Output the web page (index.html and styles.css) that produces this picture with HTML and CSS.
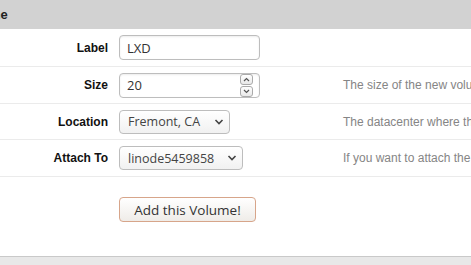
FILE: index.html
```html
<!DOCTYPE html>
<html lang="en">
<head>
    <meta charset="UTF-8">
    <title>Add a Volume</title>
    <link rel="stylesheet" href="styles.css">
</head>
<body>
    <div class="panel">
        <div class="panel-head">Add a Volume</div>

        <div class="row r-label">
            <div class="label">Label</div>
            <div class="field"><input class="text-input" type="text" value="LXD"></div>
            <div class="help"></div>
        </div>

        <div class="row r-size">
            <div class="label">Size</div>
            <div class="field">
                <div class="number-input">
                    <input type="text" value="20">
                    <span class="spin">
                        <span class="spin-btn"><svg width="7" height="5" viewBox="0 0 7 5"><path d="M1 4 L3.5 1.5 L6 4" fill="none" stroke="#555" stroke-width="1.2"/></svg></span>
                        <span class="spin-btn"><svg width="7" height="5" viewBox="0 0 7 5"><path d="M1 1 L3.5 3.5 L6 1" fill="none" stroke="#555" stroke-width="1.2"/></svg></span>
                    </span>
                </div>
            </div>
            <div class="help">The size of the new volume in GiB.</div>
        </div>

        <div class="row r-loc">
            <div class="label">Location</div>
            <div class="field">
                <div class="select loc">
                    <span>Fremont, CA</span>
                    <svg width="10" height="6" viewBox="0 0 10 6"><path d="M1.5 1 L5 4.5 L8.5 1" fill="none" stroke="#444" stroke-width="1.6"/></svg>
                </div>
            </div>
            <div class="help">The datacenter where the new volume will live.</div>
        </div>

        <div class="row r-attach">
            <div class="label">Attach To</div>
            <div class="field">
                <div class="select node">
                    <span>linode5459858</span>
                    <svg width="10" height="6" viewBox="0 0 10 6"><path d="M1.5 1 L5 4.5 L8.5 1" fill="none" stroke="#444" stroke-width="1.6"/></svg>
                </div>
            </div>
            <div class="help">If you want to attach the new volume to a Linode.</div>
        </div>

        <div class="actions">
            <button class="submit">Add this Volume!</button>
        </div>
    </div>
    <div class="page-foot"></div>
</body>
</html>
```

FILE: styles.css
```css
body {
    margin: 0;
    background-color: #e8e8e8;
    font-family: "Liberation Sans", Arial, sans-serif;
    overflow: hidden;
}
.panel {
    margin-left: -88px;
    width: 640px;
    background-color: white;
    border-bottom: 1px solid #c9c9c9;
}
.panel-head {
    height: 29px;
    line-height: 29px;
    padding-left: 10px;
    background-color: #d2d2d2;
    font-weight: bold;
    font-size: 13px;
    color: #222;
}
.row {
    display: grid;
    grid-template-columns: 203px 228px 1fr;
    align-items: center;
    height: 36px;
    border-bottom: 1px solid #ebebeb;
}
.r-label {
    height: 37px;
}
.r-loc {
    height: 35px;
}
.label {
    text-align: right;
    padding-right: 7px;
    font-weight: bold;
    font-size: 12px;
    color: #111;
}
.field {
    padding-left: 4px;
}
.help {
    font-size: 12px;
    color: #858585;
    white-space: nowrap;
}
.text-input, .number-input {
    box-sizing: border-box;
    width: 141px;
    height: 25px;
    border: 1px solid #bdbdbd;
    border-radius: 4px;
    box-shadow: inset 0 1px 2px rgba(0,0,0,0.08);
    background-color: white;
    font-family: "Open Sans", sans-serif;
    font-size: 13px;
    color: #333;
}
.text-input {
    padding: 0 7px;
}
.number-input {
    display: flex;
    align-items: center;
    padding: 0 6px 0 7px;
}
.number-input input {
    border: none;
    outline: none;
    width: 100%;
    padding: 0;
    font: inherit;
    color: inherit;
    background: none;
}
.spin {
    display: flex;
    flex-direction: column;
    gap: 1px;
}
.spin-btn {
    display: flex;
    align-items: center;
    justify-content: center;
    width: 11px;
    height: 9px;
    border: 1px solid #aaa;
    border-radius: 3px;
    background: linear-gradient(#fff, #e9e9e9);
}
.select {
    box-sizing: border-box;
    display: flex;
    align-items: center;
    justify-content: space-between;
    height: 24px;
    padding: 0 5px 0 8px;
    border: 1px solid #bdbdbd;
    border-radius: 4px;
    background: linear-gradient(#ffffff, #f1f1f1);
    font-family: "Open Sans", sans-serif;
    font-size: 12.5px;
    color: #444;
}
.select.loc {
    width: 111px;
}
.select.node {
    width: 124px;
}
.actions {
    height: 79px;
    padding-left: 207px;
    display: flex;
    align-items: flex-start;
}
.submit {
    width: 137px;
    height: 25px;
    margin-top: 20px;
    border: 1px solid #d7a58a;
    border-radius: 4px;
    background: linear-gradient(#ffffff, #efece8);
    font-family: "Open Sans", sans-serif;
    font-size: 13.5px;
    color: #333;
    cursor: pointer;
}
.page-foot {
    height: 20px;
}
```
